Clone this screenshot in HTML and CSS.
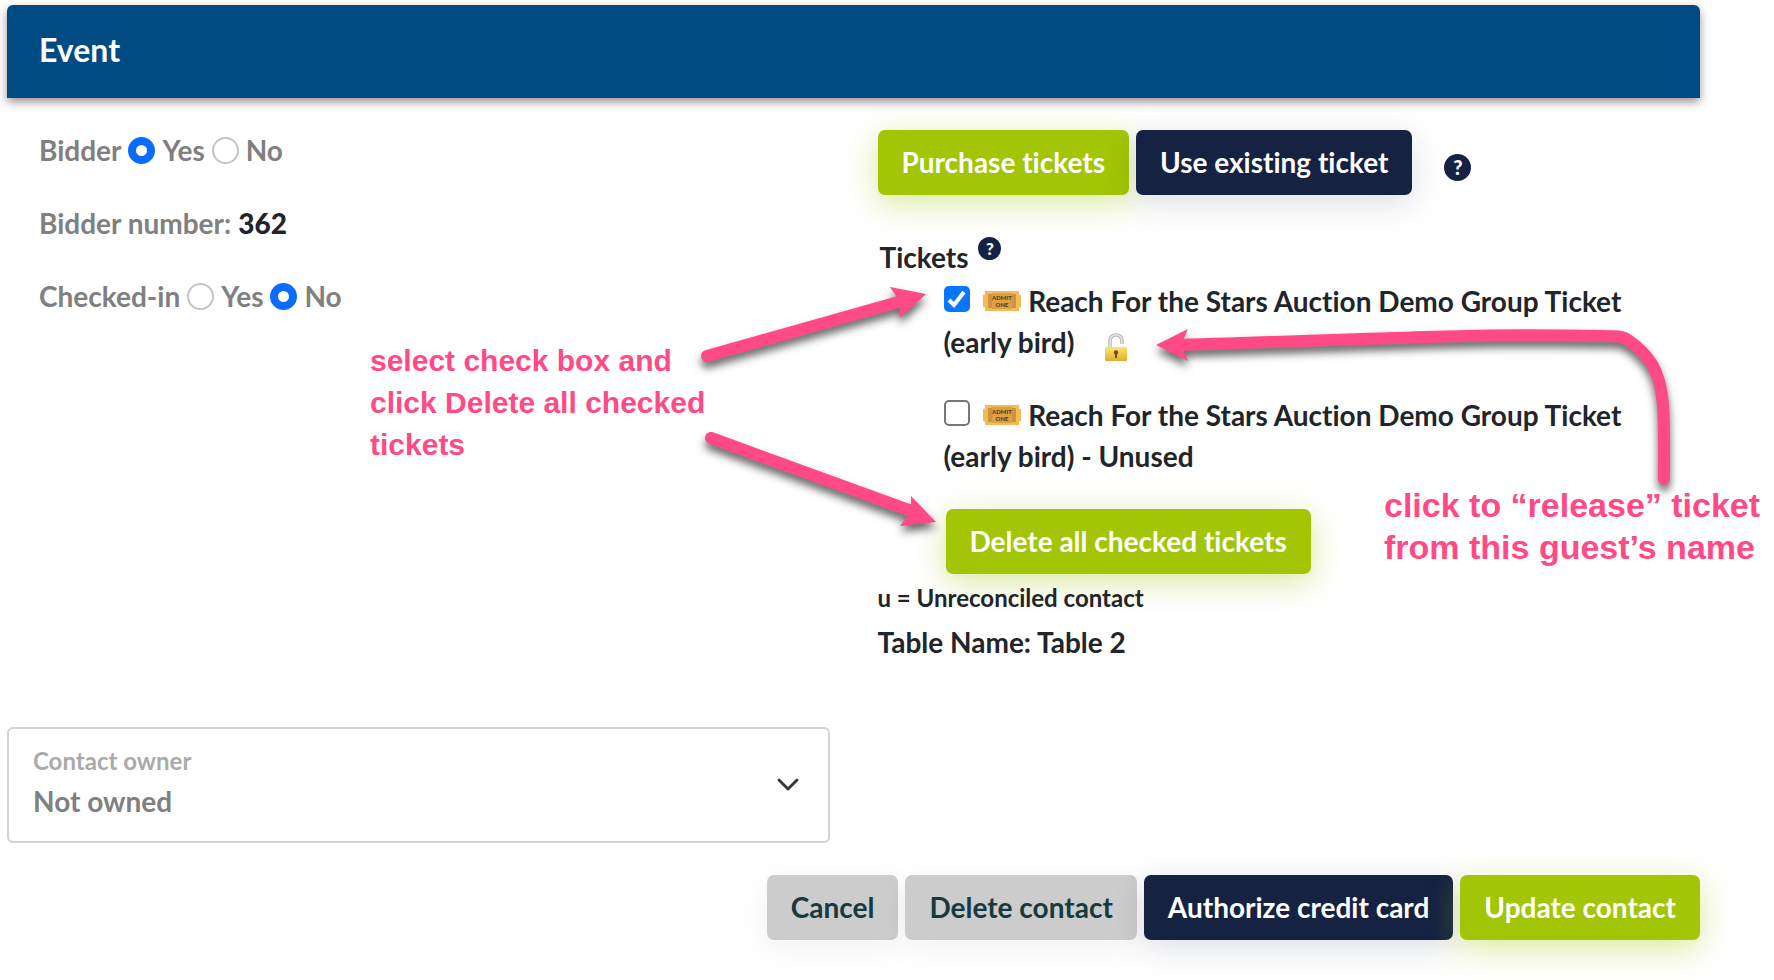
FILE: index.html
```html
<!DOCTYPE html>
<html lang="en">
<head>
<meta charset="UTF-8">
<meta name="viewport" content="width=device-width, initial-scale=1.0">
<title>Event</title>
<link rel="stylesheet" href="styles.css">
</head>
<body>
<form class="page">
  <h1 class="card-header">Event</h1>

  <div class="columns">
    <div class="bidder">
      <div class="field">
        <span>Bidder</span>
        <input type="radio" name="bidder" id="bidderYes" checked>
        <label for="bidderYes">Yes</label>
        <input type="radio" name="bidder" id="bidderNo">
        <label for="bidderNo">No</label>
      </div>
      <div class="field">
        <span>Bidder number:</span>
        <strong>362</strong>
      </div>
      <div class="field">
        <span>Checked-in</span>
        <input type="radio" name="checkedIn" id="checkedYes">
        <label for="checkedYes">Yes</label>
        <input type="radio" name="checkedIn" id="checkedNo" checked>
        <label for="checkedNo">No</label>
      </div>
    </div>

    <div class="tickets">
      <div class="buttons">
        <button type="button" class="btn green">Purchase tickets</button>
        <button type="button" class="btn navy">Use existing ticket</button>
        <button type="button" class="help">?</button>
      </div>

      <h2 class="tickets-title">Tickets <button type="button" class="help small">?</button></h2>

      <ul class="ticket-list">
        <li>
          <input type="checkbox" id="ticket1" checked>
          <svg class="ticket-icon" viewBox="0 0 38 20">
            <path d="M2 0H36V3Q36 4 38 4V16Q36 16 36 17V20H2V17Q2 16 0 16V4Q2 4 2 3Z" fill="#f7b955"/>
            <path d="M5 3H33V17H5Z" fill="#cf9340"/>
            <path d="M9 2H29V18H9Z" fill="#dca045"/>
            <text x="19" y="9" class="admit">ADMIT</text>
            <text x="19" y="16" class="admit">ONE</text>
          </svg>
          <label for="ticket1">Reach For the Stars Auction Demo Group Ticket (early bird)</label>
          <button type="button" class="lock" aria-label="Release">
            <svg viewBox="0 0 22 28">
              <defs>
                <linearGradient id="gold" x1="0" y1="0" x2="0" y2="1">
                  <stop offset="0" stop-color="#fbe56c"/>
                  <stop offset="1" stop-color="#dfb02c"/>
                </linearGradient>
              </defs>
              <path d="M5 15V8.500C5 4 7.500 2 11 2S17 4 17 8.500V11" fill="none" stroke="#b9b9b9" stroke-width="3.500"/>
              <path d="M5 15V8.500C5 4 7.500 2 11 2S17 4 17 8.500V11" fill="none" stroke="#e6e6e6" stroke-width="1.500"/>
              <rect x="0" y="14" width="22" height="14" rx="1" fill="url(#gold)"/>
              <circle cx="11" cy="19.500" r="2.200" fill="#7a4a12"/>
              <path d="M10 20H12V25H10Z" fill="#7a4a12"/>
            </svg>
          </button>
        </li>
        <li>
          <input type="checkbox" id="ticket2">
          <svg class="ticket-icon" viewBox="0 0 38 20">
            <path d="M2 0H36V3Q36 4 38 4V16Q36 16 36 17V20H2V17Q2 16 0 16V4Q2 4 2 3Z" fill="#f7b955"/>
            <path d="M5 3H33V17H5Z" fill="#cf9340"/>
            <path d="M9 2H29V18H9Z" fill="#dca045"/>
            <text x="19" y="9" class="admit">ADMIT</text>
            <text x="19" y="16" class="admit">ONE</text>
          </svg>
          <label for="ticket2">Reach For the Stars Auction Demo Group Ticket (early bird) - Unused</label>
        </li>
      </ul>

      <button type="button" class="btn green delete-checked">Delete all checked tickets</button>
      <p class="note">u = Unreconciled contact</p>
      <p class="table-name">Table Name: Table 2</p>
    </div>
  </div>

  <div class="owner">
    <div class="owner-field">
      <label for="owner">Contact owner</label>
      <select id="owner">
        <option>Not owned</option>
      </select>
    </div>
    <svg class="chevron" viewBox="0 0 24 16">
      <path d="M3 3L12 12L21 3" fill="none" stroke="#343a40" stroke-width="3" stroke-linecap="round" stroke-linejoin="round"/>
    </svg>
  </div>

  <div class="buttons footer">
    <button type="button" class="btn gray">Cancel</button>
    <button type="button" class="btn gray">Delete contact</button>
    <button type="button" class="btn navy">Authorize credit card</button>
    <button type="submit" class="btn green">Update contact</button>
  </div>

  <!-- callouts drawn over the form -->
  <svg class="arrows" viewBox="0 0 1774 980" width="1774" height="980">
    <g class="arrow">
      <path class="shaft" d="M707 356L902 301"/>
      <path class="head" d="M926 294L890 287L900 302L900 318Z"/>
    </g>
    <g class="arrow">
      <path class="shaft" d="M711 438L914 512"/>
      <path class="head" d="M936 522L911 496L911 512L900 526Z"/>
    </g>
    <g class="arrow">
      <path class="shaft" d="M1664 479C1664 420 1666 388 1652 364C1644 352 1634 344 1628 340C1622 336 1616 336 1600 336C1480 334 1460 336 1180 345"/>
      <path class="head" d="M1156 345L1188 329L1181 345L1188 361Z"/>
    </g>
  </svg>
  <p class="callout callout-delete">select check box and<br>click Delete all checked<br>tickets</p>
  <p class="callout callout-release">click to “release” ticket<br>from this guest’s name</p>
</form>
</body>
</html>
```

FILE: styles.css
```css
* {
  box-sizing: border-box;
}
body {
  margin: 0;
  background-color: #fff;
  color: #212529;
  font-family: Lato, "Liberation Sans", sans-serif;
  font-size: 28px;
  font-weight: 700;
  font-variant-ligatures: none;
  line-height: 41px;
}
button, select {
  font: inherit;
  font-variant-ligatures: none;
  color: inherit;
}
h1, h2, p, ul {
  margin: 0;
  padding: 0;
  font-size: inherit;
}
.page {
  position: relative;
  padding: 5px 74px 40px 7px;
}
.card-header {
  padding: 24px 32px 28px;
  border-radius: 6px 6px 0 0;
  background-color: #004b83;
  box-shadow: 0 4px 10px rgba(60, 40, 40, 0.5);
  color: #fff;
  font-size: 32px;
}
.columns {
  display: grid;
  grid-template-columns: 1fr 1fr;
  padding-top: 32px;
}

/* left column */
.bidder {
  display: flex;
  flex-direction: column;
  gap: 32px;
  padding-left: 32px;
  color: #808080;
}
.field {
  display: flex;
  align-items: center;
  gap: 7px;
}
.field strong {
  color: #212529;
}
input[type="radio"] {
  appearance: none;
  width: 27px;
  height: 27px;
  margin: 0;
  border: 2px solid #c4c4c4;
  border-radius: 50%;
  background-color: #fff;
}
input[type="radio"]:checked {
  border: 8px solid #0a6cff;
}

/* right column */
.tickets {
  padding-left: 24px;
}
.buttons {
  display: flex;
  gap: 7px;
}
.btn {
  padding: 12px 24px;
  border: none;
  border-radius: 7px;
  cursor: pointer;
}
.green {
  background-color: #a2c606;
  box-shadow: 0 8px 32px rgba(162, 198, 6, 0.4);
  color: #fff;
}
.navy {
  background-color: #152242;
  box-shadow: 0 8px 32px rgba(21, 34, 66, 0.15);
  color: #fff;
}
.gray {
  background-color: #ccc;
  box-shadow: 0 8px 32px rgba(0, 0, 0, 0.06);
  color: #163a3e;
}
.help {
  width: 27px;
  height: 27px;
  margin: 24px 0 0 25px;
  padding: 0;
  border: none;
  border-radius: 50%;
  background-color: #152242;
  color: #fff;
  font-size: 20px;
  font-weight: 900;
  line-height: 27px;
}
.help.small {
  width: 23px;
  height: 23px;
  margin: 0 0 0 3px;
  font-size: 17px;
  line-height: 23px;
  vertical-align: 13px;
}
.tickets-title {
  height: 41px;
  margin-top: 42px;
  padding-left: 2px;
}
.ticket-list {
  list-style: none;
  padding: 3px 60px 0 66px;
}
.ticket-list li {
  margin-bottom: 32px;
}
input[type="checkbox"] {
  appearance: none;
  width: 26px;
  height: 26px;
  margin: 0 7px 0 0;
  border: 2px solid #767676;
  border-radius: 5px;
  background-color: #fff;
  vertical-align: 0;
}
input[type="checkbox"]:checked {
  border-color: #0a75ff;
  background: #0a75ff url("data:image/svg+xml,%3Csvg xmlns='http://www.w3.org/2000/svg' viewBox='0 0 22 22'%3E%3Cpath d='M3 12L8 17L18 4' fill='none' stroke='white' stroke-width='4'/%3E%3C/svg%3E") center no-repeat;
}
.ticket-icon {
  width: 38px;
  height: 20px;
  vertical-align: 1px;
}
.admit {
  fill: #5f3c10;
  font-size: 6px;
  font-weight: 900;
  text-anchor: middle;
}
.lock {
  margin-left: 24px;
  padding: 0;
  border: none;
  background: none;
  line-height: 0;
  cursor: pointer;
}
.lock svg {
  width: 22px;
  height: 28px;
  vertical-align: -8px;
}
.delete-checked {
  display: block;
  margin-left: 68px;
}
.note {
  margin-top: 3px;
  font-size: 24px;
}
.table-name {
  margin-top: 4px;
}

.owner {
  display: flex;
  align-items: center;
  width: calc(50% - 24px);
  margin-top: 64px;
  padding: 11px 28px 19px 24px;
  border: 2px solid #ced4da;
  border-radius: 6px;
}
.owner-field {
  flex: 1;
  display: flex;
  flex-direction: column;
}
.owner-field label {
  color: #aaa;
  font-size: 24px;
}
.owner-field select {
  appearance: none;
  padding: 0;
  border: none;
  background: none;
  color: #808080;
}
.chevron {
  width: 24px;
  height: 16px;
  margin-top: 8px;
}
.footer {
  justify-content: flex-end;
  padding-top: 32px;
}

.arrows {
  position: absolute;
  top: 0;
  left: 0;
  pointer-events: none;
}
.arrow {
  filter: drop-shadow(0 6px 4px rgba(0, 0, 0, 0.6));
}
.shaft {
  fill: none;
  stroke: #ff4a86;
  stroke-width: 12px;
  stroke-linecap: round;
}
.head {
  fill: #ff4a86;
}
.callout {
  position: absolute;
  color: #ff4a86;
  font-family: "Liberation Sans", Arial, sans-serif;
  font-size: 30px;
  line-height: 42px;
}
.callout-delete {
  top: 340px;
  left: 370px;
}
.callout-release {
  top: 484px;
  left: 1384px;
  font-size: 34px;
}
```
